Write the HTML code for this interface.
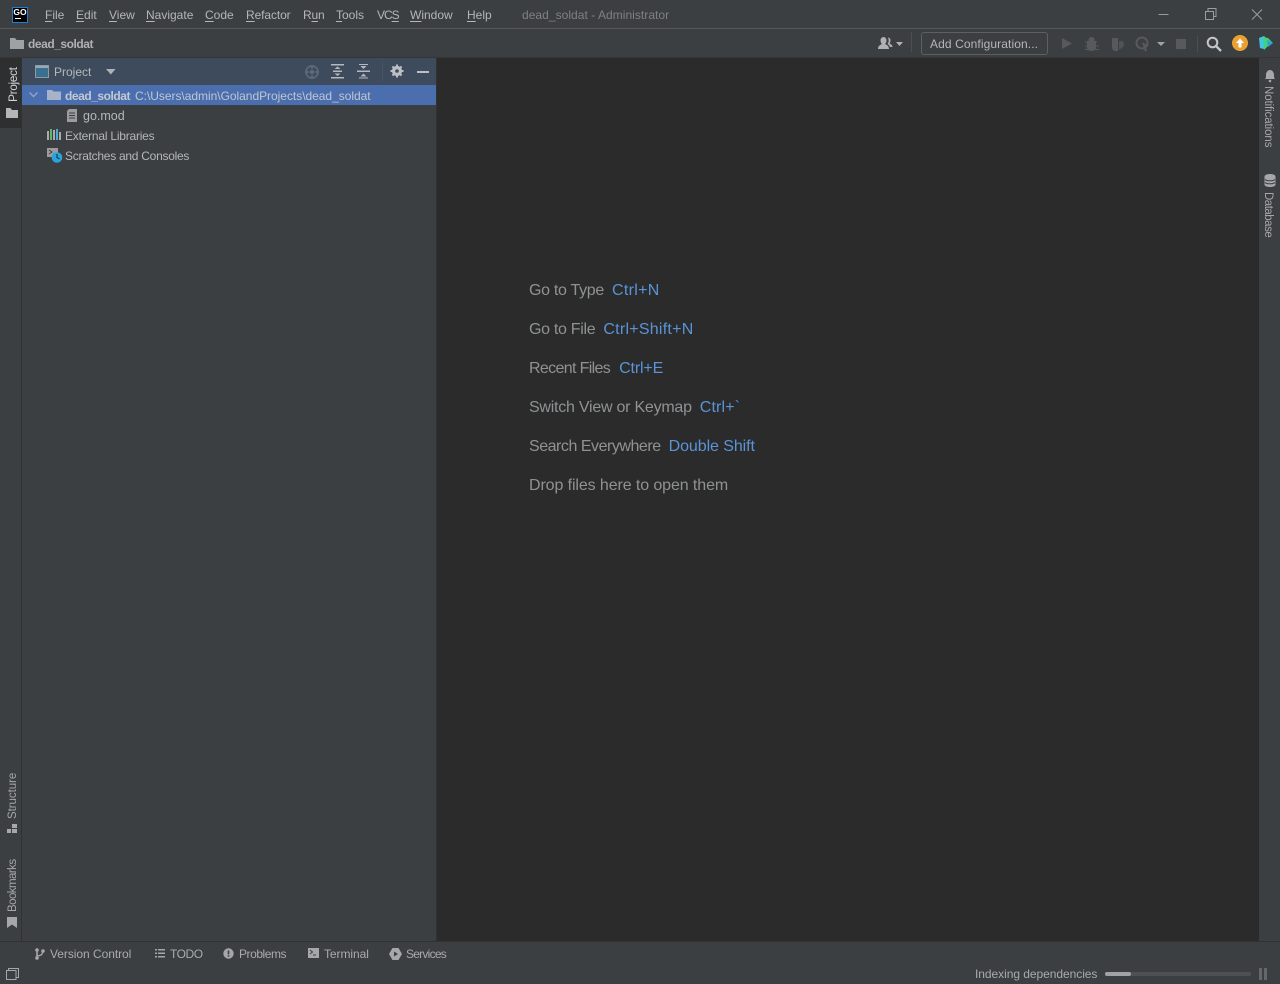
<!DOCTYPE html>
<html><head><meta charset="utf-8"><style>
html,body{margin:0;padding:0;width:1280px;height:984px;overflow:hidden;background:#3c3f41}
body{position:relative;font-family:"Liberation Sans",sans-serif;font-size:12px;color:#bbb}
.a{position:absolute}
.t{position:absolute;white-space:nowrap;line-height:16px}
.m{top:7px;color:#b4b6b8}
.m u{text-decoration-thickness:1px;text-underline-offset:2px}
.h{position:absolute;left:529px;font-size:16px;line-height:20px;color:#8f9294;white-space:nowrap}
.h b{font-weight:normal;color:#5a94d6;margin-left:8px}
.v{position:absolute;white-space:nowrap;line-height:14px;transform-origin:0 0}
svg{position:absolute;overflow:visible}
</style></head><body>
<!-- title bar -->
<div class="a" style="left:0;top:28px;width:1280px;height:1px;background:#555759"></div>
<div class="a" style="left:12px;top:7px;width:14px;height:14px;background:#000;border:1px solid #1f7fd8"></div>
<div class="t" style="left:13px;top:4px;width:14px;text-align:center;color:#fff;font-size:8.5px;font-weight:bold">GO</div>
<div class="a" style="left:15px;top:18px;width:6px;height:1px;background:#fff"></div>
<div class="t m" style="left:45px"><u>F</u>ile</div>
<div class="t m" style="left:76px"><u>E</u>dit</div>
<div class="t m" style="left:109px"><u>V</u>iew</div>
<div class="t m" style="left:146px"><u>N</u>avigate</div>
<div class="t m" style="left:205px"><u>C</u>ode</div>
<div class="t m" style="left:246px;letter-spacing:-.1px"><u>R</u>efactor</div>
<div class="t m" style="left:303px;letter-spacing:-.2px">R<u>u</u>n</div>
<div class="t m" style="left:336px"><u>T</u>ools</div>
<div class="t m" style="left:377px;letter-spacing:-1px">VC<u>S</u></div>
<div class="t m" style="left:410px"><u>W</u>indow</div>
<div class="t m" style="left:467px"><u>H</u>elp</div>
<div class="t" style="left:522px;top:7px;color:#808080;letter-spacing:.04px">dead_soldat - Administrator</div>
<svg style="left:0;top:0" width="1280" height="28" fill="none" stroke="#9a9c9e" stroke-width="1">
<path d="M1158.500 14.500h10"/><path d="M1205.500 11.500h8v8h-8zM1208 11v-2.500h8v8h-2.500"/><path d="M1252 9.500l10 10M1262 9.500l-10 10"/>
</svg>
<!-- nav bar -->
<svg style="left:10px;top:38px" width="14" height="11"><path d="M0 0h5l1.500 2H14v9H0z" fill="#9ea2a6"/></svg>
<div class="t" style="left:28px;top:36px;font-weight:bold;color:#afb1b3;font-size:12px;letter-spacing:-.45px">dead_soldat</div>
<svg style="left:877px;top:36px" width="28" height="15"><path d="M1 13c0-3 2-4 4-5-1-1-1.500-2-1.500-3.500C3.500 2.500 5 1 6.500 1S9.500 2.500 9.500 4.500C9.500 6 9 7 8 8c2 1 4 2 4 5z" fill="#afb1b3"/><path d="M10.500 1.500c2 0 3 1.200 3 3 0 1.200-.5 2.200-1 3 1.500.7 3 1.700 3 3.500h-2.500c-.5-1.500-1.500-2.500-2.500-3 .7-1 1.200-2 1.200-3.500 0-1-.3-2-.7-3z" fill="#afb1b3"/><path d="M19 6h7l-3.500 4z" fill="#afb1b3"/></svg>
<div class="a" style="left:911px;top:32px;width:1px;height:20px;background:#4c4e50"></div>
<div class="a" style="left:921px;top:32px;width:125px;height:21px;border:1px solid #5e6060;border-radius:3px"></div>
<div class="t" style="left:930px;top:36px;color:#b4b6b8;letter-spacing:.1px">Add Configuration...</div>
<svg style="left:1060px;top:36px" width="125" height="16" fill="#58595b">
<path d="M2 2l10 5.500L2 13z"/>
<path d="M27 5h9v7c0 1-2 3-4.500 3S27 13 27 12z"/><circle cx="31.500" cy="4" r="3"/><path d="M25 6l12 0M25 10h14M25 13.500h14" stroke="#58595b"/>
<path d="M52 2h6v13h-3c-2 0-3-2-3-4z"/><path d="M59 5h3c1 0 2 2 2 3v2l-5 4z" opacity=".75"/>
<circle cx="82" cy="7" r="5.500" fill="none" stroke="#58595b" stroke-width="2"/><path d="M82 6l7 4-3 1 1 4-2 .5-1-3z"/>
<path d="M97 6h8l-4 4z" fill="#a0a2a4"/>
<rect x="116" y="3" width="10" height="10"/></svg>
<div class="a" style="left:1197px;top:36px;width:1px;height:16px;background:#4c4e50"></div>
<svg style="left:1206px;top:36px" width="16" height="16" fill="none" stroke="#c4c6c8" stroke-width="2"><circle cx="6.500" cy="6.500" r="4.800"/><path d="M10 10l5 5" stroke-width="2.300"/></svg>
<div class="a" style="left:1232px;top:35px;width:16px;height:16px;border-radius:50%;background:#eba132"></div>
<svg style="left:1232px;top:35px" width="16" height="16"><path d="M8 3.500L12 8H9.500v4.500h-3V8H4z" fill="#fff"/></svg>
<svg style="left:1259px;top:36px" width="15" height="14"><path d="M0 2l5-2 3 3-3 10-4-1z" fill="#3fc6e6"/><path d="M4 1l5 1 5 5-4 2-5 5z" fill="#43d17c"/><path d="M8 4l6 3-5 4z" fill="#2b9fe0"/></svg>
<!-- editor -->
<div class="a" style="left:437px;top:57px;width:822px;height:884px;background:#2b2b2b"></div>
<div class="a" style="left:436px;top:57px;width:1px;height:884px;background:#323232"></div>
<div class="a" style="left:0;top:57px;width:1280px;height:1px;background:#333537"></div>
<div class="a" style="left:0;top:941px;width:1280px;height:1px;background:#323232"></div>
<!-- left strip -->
<div class="a" style="left:21px;top:58px;width:1px;height:883px;background:#323232"></div>
<div class="a" style="left:0;top:58px;width:21px;height:70px;background:#2d2f30"></div>
<div class="v" style="left:6px;top:102px;transform:rotate(-90deg);color:#d0d2d3;letter-spacing:-.4px">Project</div>
<svg style="left:6px;top:108px" width="12" height="10"><path d="M0 0h4.500l1.500 2h6v8H0z" fill="#b4b6b8"/></svg>
<div class="v" style="left:6px;top:819px;transform:rotate(-90deg);font-size:11.500px;color:#a5a7a9;letter-spacing:-.05px">Structure</div>
<svg style="left:7px;top:824px" width="11" height="10" fill="#a5a7a9"><rect x="5" y="0" width="5" height="4"/><rect x="0" y="5" width="4" height="4"/><rect x="5" y="5" width="5" height="4"/></svg>
<div class="v" style="left:6px;top:912px;transform:rotate(-90deg);font-size:11.500px;color:#a5a7a9;letter-spacing:-.55px">Bookmarks</div>
<svg style="left:7px;top:917px" width="10" height="11"><path d="M0 0h10v11L5 7.500 0 11z" fill="#a5a7a9"/></svg>
<!-- project header -->
<div class="a" style="left:22px;top:58px;width:414px;height:27px;background:#3d4b5c"></div>
<svg style="left:35px;top:65px" width="15" height="13"><rect x=".5" y=".5" width="13" height="12" fill="#39708f" stroke="#8c9aa8"/><rect x="1" y="1" width="12" height="2" fill="#9aa7b4"/></svg>
<div class="t" style="left:54px;top:64px;color:#b4b9bd">Project</div>
<svg style="left:106px;top:69px" width="10" height="6"><path d="M0 0h9.500L4.800 5.500z" fill="#adb2b6"/></svg>
<svg style="left:304px;top:64px" width="16" height="16" fill="none" stroke="#5f6d7b" stroke-width="1.500"><circle cx="8" cy="8" r="6"/><circle cx="8" cy="8" r="1.500" fill="#5f6d7b"/><path d="M8 1v4M8 11v4M1 8h4M11 8h4"/></svg>
<svg style="left:331px;top:64px" width="14" height="15" fill="#b4b9bd"><rect x="0" y="0" width="13" height="1.500"/><rect x="0" y="13" width="13" height="1.500"/><rect x="2" y="6.500" width="9" height="1.500"/><path d="M6.500 2.500L9.500 5h-6zM6.500 12l3-2.500h-6z"/></svg>
<svg style="left:357px;top:64px" width="14" height="15" fill="#b4b9bd"><rect x="0" y="6.500" width="13" height="1.500"/><path d="M6.500 5L3.500 2h6zM6.500 9.500l3 3h-6z"/><rect x="2" y="0" width="9" height="1"/><rect x="2" y="13.500" width="9" height="1"/></svg>
<div class="a" style="left:382px;top:62px;width:1px;height:19px;background:#465465"></div>
<svg style="left:390px;top:64px" width="14" height="14"><circle cx="7" cy="7" r="3.800" fill="none" stroke="#bcc0c4" stroke-width="2.600"/><path d="M7 .5v13M.5 7h13M2.400 2.400l9.200 9.200M11.600 2.400l-9.200 9.200" stroke="#bcc0c4" stroke-width="2"/><circle cx="7" cy="7" r="1.800" fill="#3d4b5c"/></svg>
<div class="a" style="left:417px;top:71px;width:12px;height:2px;background:#bcc0c4"></div>
<!-- tree -->
<div class="a" style="left:22px;top:85px;width:414px;height:20px;background:#4b6eaf"></div>
<svg style="left:29px;top:92px" width="10" height="6" fill="none" stroke="#8fa5cc" stroke-width="1.400"><path d="M.5.500l4 4 4-4"/></svg>
<svg style="left:47px;top:90px" width="14" height="10"><path d="M0 0h5l1.500 1.500H14V10H0z" fill="#a6b3c9"/></svg>
<div class="t" style="left:65px;top:88px;font-weight:bold;color:#c4c8d0;letter-spacing:-.45px">dead_soldat</div>
<div class="t" style="left:135px;top:88px;color:#c0c6d0;letter-spacing:-.03px">C:\Users\admin\GolandProjects\dead_soldat</div>
<svg style="left:67px;top:109px" width="10" height="13"><path d="M2 0h8v13H0V2z" fill="#9a9c9e"/><path d="M2 4h6M2 6.500h6M2 9h6" stroke="#3c3f41"/></svg>
<div class="t" style="left:83px;top:108px;font-size:12.500px;color:#b4b6b8">go.mod</div>
<svg style="left:47px;top:129px" width="15" height="12"><rect x="0" y="2" width="2" height="9" fill="#a8abad"/><rect x="3" y="0" width="2" height="11" fill="#62b26a"/><rect x="6" y="1" width="2" height="10" fill="#a8abad"/><rect x="9" y="0" width="2" height="11" fill="#4ea6d8"/><rect x="12" y="3" width="2" height="8" fill="#a8abad"/></svg>
<div class="t" style="left:65px;top:128px;letter-spacing:-.22px;color:#b4b6b8">External Libraries</div>
<svg style="left:47px;top:148px" width="16" height="15"><rect x="0" y="0" width="11" height="9" fill="#9a9c9e"/><path d="M2 2l3 2-3 2" stroke="#3c3f41" fill="none"/><circle cx="10" cy="9.500" r="5.300" fill="#2aa4dc"/><path d="M10 6v3.500l2.500 1.500" stroke="#123" fill="none"/></svg>
<div class="t" style="left:65px;top:148px;letter-spacing:-.27px;color:#b4b6b8">Scratches and Consoles</div>
<!-- hints -->
<div class="h" style="top:281px"><span style="letter-spacing:-.3px">Go to Type</span><b style="letter-spacing:.3px">Ctrl+N</b></div>
<div class="h" style="top:320px"><span style="letter-spacing:-.3px">Go to File</span><b style="letter-spacing:.25px">Ctrl+Shift+N</b></div>
<div class="h" style="top:359px"><span style="letter-spacing:-.65px">Recent Files</span><b style="letter-spacing:-.15px;margin-left:9px">Ctrl+E</b></div>
<div class="h" style="top:398px"><span style="letter-spacing:-.24px">Switch View or Keymap</span><b style="letter-spacing:.15px">Ctrl+`</b></div>
<div class="h" style="top:437px"><span style="letter-spacing:-.47px">Search Everywhere</span><b style="letter-spacing:-.08px">Double Shift</b></div>
<div class="h" style="top:476px;letter-spacing:-.1px">Drop files here to open them</div>
<!-- right strip -->
<svg style="left:1264px;top:69px" width="12" height="14"><path d="M1 10c1-1 1-2 1-4 0-3 2-5 4-5s4 2 4 5c0 2 0 3 1 4z" fill="#a5a7a9"/><circle cx="6" cy="12" r="1.300" fill="#a5a7a9"/></svg>
<div class="v" style="left:1275px;top:86px;transform:rotate(90deg);font-size:11.500px;color:#a5a7a9;letter-spacing:-.1px">Notifications</div>
<svg style="left:1264px;top:174px" width="12" height="13" fill="none" stroke="#a5a7a9"><ellipse cx="6" cy="2.500" rx="5" ry="2" fill="#a5a7a9"/><path d="M1 2.500v8c0 1 2 2 5 2s5-1 5-2v-8" fill="#a5a7a9"/><path d="M1 5.500c1 1 3 1.300 5 1.300s4-.3 5-1.300M1 8.500c1 1 3 1.300 5 1.300s4-.3 5-1.300" stroke="#3c3f41"/></svg>
<div class="v" style="left:1275px;top:192px;transform:rotate(90deg);font-size:11.500px;color:#a5a7a9;letter-spacing:-.5px">Database</div>
<!-- bottom tool bar -->
<svg style="left:35px;top:948px" width="10" height="12" fill="#a5a7a9"><circle cx="2" cy="2" r="1.800"/><circle cx="2" cy="10" r="1.800"/><circle cx="8" cy="3" r="1.800"/><path d="M1.200 2h1.600v8H1.200z"/><path d="M7.500 4c0 3-2 3.500-5 4" stroke="#a5a7a9" fill="none" stroke-width="1.300"/></svg>
<div class="t" style="left:50px;top:946px;letter-spacing:-.05px;color:#a8aaac">Version Control</div>
<svg style="left:155px;top:948px" width="10" height="10" fill="#a5a7a9"><path d="M0 1h2v1.500H0zM3 1h7v1.500H3zM0 4.500h2V6H0zM3 4.500h7V6H3zM0 8h2v1.500H0zM3 8h7v1.500H3z"/></svg>
<div class="t" style="left:170px;top:946px;letter-spacing:-.45px;color:#a8aaac">TODO</div>
<svg style="left:223px;top:948px" width="11" height="11"><circle cx="5.500" cy="5.500" r="5.200" fill="#a5a7a9"/><rect x="4.700" y="2.500" width="1.600" height="3.800" fill="#3c3f41"/><rect x="4.700" y="7.200" width="1.600" height="1.500" fill="#3c3f41"/></svg>
<div class="t" style="left:239px;top:946px;letter-spacing:-.45px;color:#a8aaac">Problems</div>
<svg style="left:308px;top:948px" width="11" height="10"><rect width="11" height="10" fill="#a5a7a9"/><path d="M2 2l2.500 2L2 6" fill="none" stroke="#3c3f41"/><path d="M5 7h3" stroke="#3c3f41"/></svg>
<div class="t" style="left:324px;top:946px;letter-spacing:-.07px;color:#a8aaac">Terminal</div>
<svg style="left:389px;top:948px" width="13" height="12"><path d="M3.500 0h6L13 6l-3.500 6h-6L0 6z" fill="#a5a7a9"/><path d="M5 3.500l4 2.500-4 2.500z" fill="#3c3f41"/></svg>
<div class="t" style="left:406px;top:946px;letter-spacing:-.75px;color:#a8aaac">Services</div>
<!-- status bar -->
<svg style="left:6px;top:968px" width="13" height="12" fill="none" stroke="#a5a7a9"><path d="M.5 2.500h9.500v9H.5z"/><path d="M2.500 2.500V.5h10v9H10"/></svg>
<div class="t" style="left:975px;top:966px;color:#a8aaac;letter-spacing:-.05px">Indexing dependencies</div>
<div class="a" style="left:1105px;top:972px;width:146px;height:4px;border-radius:2px;background:#4e5052"></div>
<div class="a" style="left:1105px;top:972px;width:26px;height:4px;border-radius:2px;background:#a0a2a4"></div>
<div class="a" style="left:1259px;top:968px;width:3px;height:12px;background:#65676a"></div>
<div class="a" style="left:1264px;top:968px;width:3px;height:12px;background:#65676a"></div>
</body></html>
